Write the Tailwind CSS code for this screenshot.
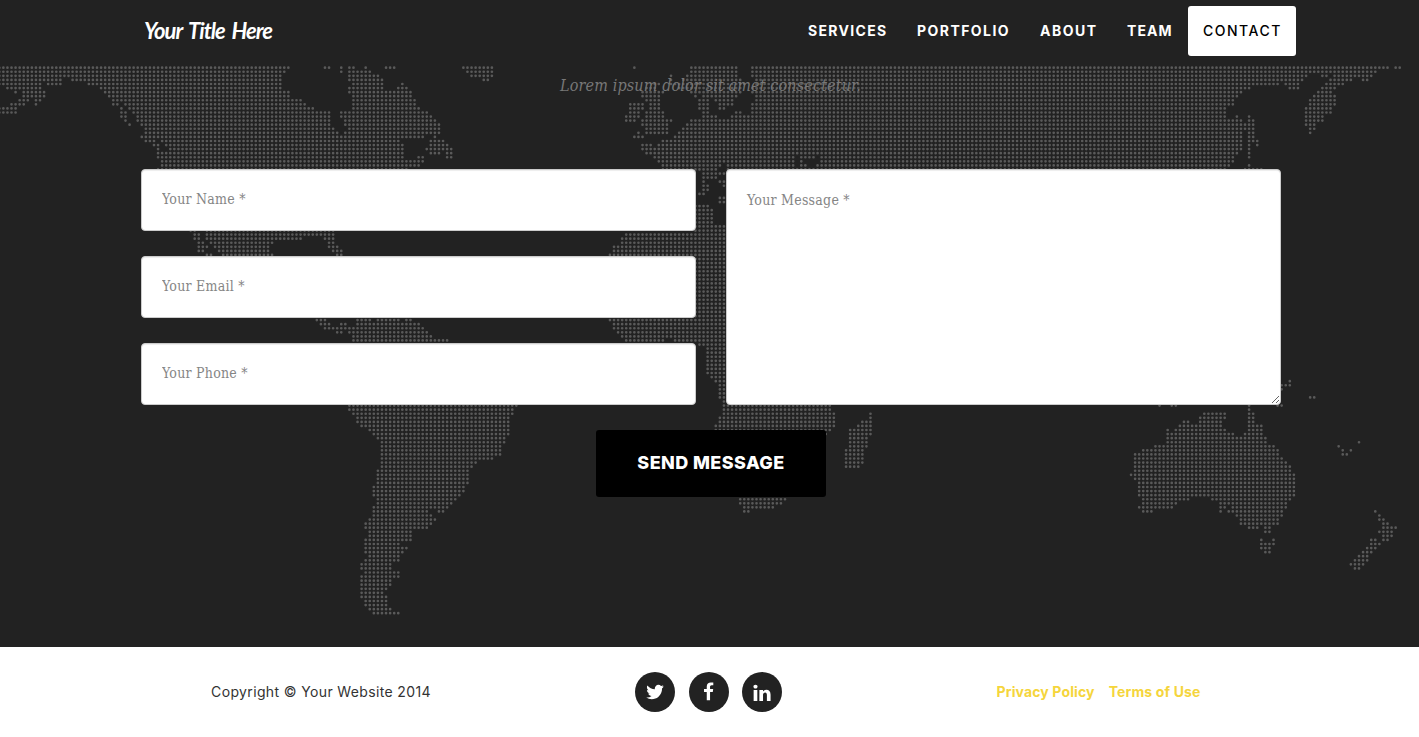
<!DOCTYPE html>
<html lang="en">
<head>
<meta charset="utf-8">
<title>Your Title Here</title>
<script src="https://cdn.jsdelivr.net/npm/@tailwindcss/browser@4"></script>
</head>
<body class="w-[1419px] h-[737px] overflow-hidden bg-white font-['Inter',sans-serif]">
<div class="relative h-[647px] bg-[#222222]">
  <svg id="map" class="absolute inset-0" width="1419" height="647" aria-hidden="true"><path id="dots" fill="none" stroke="#5a5a5a" stroke-width="2.7" stroke-linecap="round"/></svg>

  <nav class="relative h-[66px] bg-[#222222] pl-[144px] pr-[123px] pt-[6px] flex justify-between items-start text-white">
    <a class="h-[50px] pb-[2px] flex items-center text-[22px] font-bold italic font-['Lato',sans-serif] whitespace-nowrap tracking-[-1px] [word-spacing:3px]"><span>Your Title Here</span></a>
    <div class="flex text-[14px] font-bold whitespace-nowrap">
      <a class="h-[50px] pb-[2px] px-[15px] flex items-center w-[109px] tracking-[1.3px]"><span>SERVICES</span></a>
      <a class="h-[50px] pb-[2px] px-[15px] flex items-center w-[123px] tracking-[1.45px]"><span>PORTFOLIO</span></a>
      <a class="h-[50px] pb-[2px] px-[15px] flex items-center w-[87px] tracking-[1.5px]"><span>ABOUT</span></a>
      <a class="h-[50px] pb-[2px] px-[15px] flex items-center w-[76px] tracking-[1.1px]"><span>TEAM</span></a>
      <a class="h-[50px] pb-[2px] px-[15px] flex items-center w-[108px] tracking-[1.5px] bg-white text-black font-medium rounded-[3px]"><span>CONTACT</span></a>
    </div>
  </nav>

  <h3 class="relative h-[103px] pt-[8px] pl-[560px] text-[16px] leading-6 italic tracking-[0.14px] text-[#777777] font-['DejaVu_Serif_Condensed','DejaVu_Serif',serif] whitespace-nowrap"><span>Lorem ipsum dolor sit amet consectetur.</span></h3>

  <form class="relative ml-[141px] w-[1140px]">
    <div class="flex gap-[30px]">
      <div class="w-[555px] flex flex-col gap-[25px]">
        <input class="h-[62px] px-5 pb-[2px] bg-white border border-[#cccccc] rounded-[4px] shadow-[inset_0_1px_1px_rgba(0,0,0,0.075)] text-[14px] tracking-[0.25px] placeholder:text-[#858585] font-['DejaVu_Serif_Condensed','DejaVu_Serif',serif]" placeholder="Your Name *">
        <input class="h-[62px] px-5 pb-[2px] bg-white border border-[#cccccc] rounded-[4px] shadow-[inset_0_1px_1px_rgba(0,0,0,0.075)] text-[14px] tracking-[0.25px] placeholder:text-[#858585] font-['DejaVu_Serif_Condensed','DejaVu_Serif',serif]" placeholder="Your Email *">
        <input class="h-[62px] px-5 pb-[2px] bg-white border border-[#cccccc] rounded-[4px] shadow-[inset_0_1px_1px_rgba(0,0,0,0.075)] text-[14px] tracking-[0.25px] placeholder:text-[#858585] font-['DejaVu_Serif_Condensed','DejaVu_Serif',serif]" placeholder="Your Phone *">
      </div>
      <textarea class="w-[555px] h-[236px] p-5 bg-white border border-[#cccccc] rounded-[4px] shadow-[inset_0_1px_1px_rgba(0,0,0,0.075)] text-[14px] leading-5 tracking-[0.25px] placeholder:text-[#858585] font-['DejaVu_Serif_Condensed','DejaVu_Serif',serif]" placeholder="Your Message *"></textarea>
    </div>
    <button type="button" class="block mt-[25px] mx-auto w-[230px] h-[67px] pb-[2px] bg-black rounded-[3px] text-white text-[18px] font-extrabold tracking-[0.4px] whitespace-nowrap"><span>SEND MESSAGE</span></button>
  </form>
</div>

<footer class="ml-[126px] w-[1170px] pt-[25px] grid grid-cols-3 text-[14px] leading-10 whitespace-nowrap">
  <div class="text-center text-[#333333] tracking-[0.36px]"><span>Copyright © Your Website 2014</span></div>
  <div class="flex justify-center gap-[13.5px] pr-[5px]">
    <a class="size-10 rounded-full bg-[#222222] flex items-center justify-center"><svg width="20" height="20" viewBox="0 0 1664 1792" fill="white"><path d="M1620 408q-67 98-162 167 1 14 1 42 0 130-38 259.500t-115.500 248.500-184.500 210.500-258 146-323 54.500q-271 0-496-145 35 4 78 4 225 0 401-138-105-2-188-64.500t-114-159.500q33 5 61 5 43 0 85-11-112-23-185.500-111.500t-73.500-205.500v-4q68 38 146 41-66-44-105-115t-39-154q0-88 44-163 121 149 294.500 238.500t371.500 99.500q-8-38-8-74 0-134 94.500-228.500t228.500-94.500q140 0 236 102 109-21 205-78-37 115-142 178 93-10 186-50z"/></svg></a>
    <a class="size-10 rounded-full bg-[#222222] flex items-center justify-center"><svg width="11" height="20" viewBox="0 0 1024 1792" fill="white"><path d="M959 12v264h-157q-86 0-116 36t-30 108v189h293l-39 296h-254v759h-306v-759h-255v-296h255v-218q0-186 104-288.500t277-102.500q147 0 228 12z"/></svg></a>
    <a class="size-10 rounded-full bg-[#222222] flex items-center justify-center"><svg class="mt-px" width="18" height="20" viewBox="0 0 1536 1792" fill="white"><path d="M349 625v991h-330v-991h330zM370 319q1 73-50.500 122t-135.500 49h-2q-82 0-132-49t-50-122q0-74 51.500-122.500t134.500-48.500 133 48.500 51 122.500zM1536 1048v568h-329v-530q0-105-40.500-164.500t-126.500-59.500q-63 0-105.500 34.500t-63.500 85.500q-11 30-11 81v553h-329q2-399 2-647t-1-296l-1-48h329v144h-2q20-32 41-56t56.500-52 87-43.500 114.500-15.500q171 0 275 113.500t104 332.500z"/></svg></a>
  </div>
  <div class="flex justify-center gap-[14px] pr-[5px] text-[#f5d53c] font-bold tracking-[0.13px]"><a><span>Privacy Policy</span></a><a><span>Terms of Use</span></a></div>
</footer>

<script>
// Land areas of the dotted map. Each region: left edge in px, then "row:first-last,..." in thirds of a pixel.
const regions = [
[0, `0:0-865,977-990,1025,1050-1062,1098,1159-1183,1390-1476
1:0-855,1025,1050-1110,1403-1476
2:0-843,1050-1135,1415-1476
3:0-182,218-835,1050-1147,1452-1464
4:0-122,145-175,267-835,1062-1147,1208
5:22-122,305-835,1050-1147,1195-1220
6:48,72-135,317-865,1050-1232
7:72-135,330-865,1062-1232
8:60-85,110-122,342-903,1062-1245
9:35-72,110,342-355,378-915,1062-1245
10:0-48,365,390-940,1062-1257
11:0-48,365-378,403-990,1025-1281
12:365-378,415-990,1025-1293
13:378,415-990,1037-1305
14:390,427-990,1037-1318
15:440-1000,1050-1318
16:440-1012,1037-1318
17:427-1269,1305
18:440-465,488-1195,1293-1330
19:465-477,500-1208,1293-1342
20:477,512-1208,1281-1305,1318-1354
21:477-1208,1293-1318,1342-1354
22:477-1208,1257-1269,1342-1354
23:488-1208,1220-1269
24:488-1257
25:477-1220`],
[540, `0:285,453-590,638-1100
1:453-590,638-1100
2:393,440-590,638-1100
3:393,430-600,650-1100
4:345-357,393,405-610,650-1100
5:320-345,415-600,640-1100
6:308-370,453-600,638-1100
7:308-357,465,490-590,650-670,687-1100
8:320-357,480-500,525-580,650-1100
9:272-308,332-357,480-500,540-580,638-1100
10:272-308,332-357,480-500,540-552,638-1100
11:272-296,320-370,490-500,590-600,638-1100
12:260-296,320-370,490-530,577-1100
13:260-284,308-395,453-1100
14:308-382,440-1100
15:320-382,430-1100
16:296,320-382,418-1100
17:284-308,405-1100
18:370-1100
19:308-332,357-1100
20:308-1100
21:320-1100
22:345-760,785-815,840-1100
23:357-755,785,840-1100
24:370-535,565-755,785-800,830-1100
25:370-530,565-1100
26:490-552
27:490-530
28:490,540-552
29:490-500,552
30:490-500
31:480-490
32:540-552
33:540-552
34:468-505
35:468-515
36:468-515
37:468-515`],
[900, `0:0-1462,1487-1499
1:0-1425
2:0-1220,1267-1280,1304-1413
3:0-1208,1292-1352,1389-1401
4:0-1135,1157-1195,1280-1328
5:0-1050,1170-1195,1267-1304
6:0-1025,1255-1292
7:0-1012,1243-1304
8:0-1000,1231-1304
9:0-1000,1231-1304
10:0-975,1218-1292
11:0-975,1218-1292
12:0-975,1012,1047,1218-1268
13:0-1025,1047-1060,1218-1268
14:0-1025,1035-1060,1218-1243
15:0-1025,1035-1060,1231-1243
16:0-1025,1047-1060,1231
17:0-1025,1047-1060
18:0-1025,1047-1072
19:0-1025,1047,1072
20:0-1025,1047
21:0-1012,1047
22:0-1000,1047
23:0-1000
24:0-988,1047
25:0-975,1035-1085`],
[180, `40:33-45,80-462
41:45-57,82-462
42:45-57,82-363,437-462
43:57-70,94-278,450-462
44:57-82,106-265,450-474
45:57-70,118-265,462-486
46:82-94,130-278,474-486`],
[590, `38:318-365
39:318-405
40:318-405
41:108-405
42:97-405
43:97-405
44:72-405
45:72-405
46:60-405
47-61:318-405
62:60-405
63:72-405
64:72-405
65:85-405
66:97-405
67:108-222,255-405
68:330-405
69-75:355-405
76:367-405
77:380-405
78-81:392-405
82:405
83:403-720
84:403-720
85:403-732,842
86:390-732,842
87:390-732,817-842
88:378-732,805-842
89:378-720,780-842
90:708,780-842
91-93:780-830
94-97:768-818
98:768-805
106:452-587
107:452-575
108:465-550
109:465-477`],
[280, `62:112-136,235-270,295-357,380-392
63:124-148,185-197,235-418
64:136-197,210-430
65:173-185,210-442
66:222-455
67:222-503
83:210-710
84:210-698
85:222-698
86:235-686
87:235-686
88:247-686
89:271-686
90:283-686
91:295-674
92:307-674
93-95:307-662
96:307-637
97:307-588
98:307-576
99-102:295-564
103:283-552
104:283-552
105:283-540
106:295-528
107:295-515
108:283-503
109:283-442,478-490
110:283-454
111:271-466
112:259-454
113:259-442
114:271-393
115:271-393
116:259-393
117:259-357
118:259-381
119:259-369
120:271-357
121:259-357
122:247-333
123:247-333
124:259-357
125:247-357
126:247-333
127:247-333
128:247-320
129:247-308
130:247-320
131:259-320
132:259-320
133:271-333
134:283-357`],
[1110, `77:539
78:515-539
79:515
81:600-612
83:148,185-197,417,502-514
84:417
85:283-344,417-429
86:271-344,417-429
87:222-234,271-332,417-429
88:210-332,417-454
89:173,197-344,417-454
90:173-369,405-454
91:173-466
92:173-466,746
93:136-490,685
94:99-502,697,722
95:75-502,697-710
96:75-515
97:75-527
98:75-539
99:75-539
100:63-551
101:75-551
102-105:87-551
106:99-234,307-539
107:99-197,332-527
108:87-185,332-344,369-527
109:99-124,332,357-515,795
110:381-515,807
111:393-502,807-820
112:393-502,820-832
113:417-442,466-478,820-857
114:466-478,807-844
115:820-844
116:454,490,783-795,820-832
117:454-490,783-807
118:454-478,771-795
119:466-478,759-783
120:747-771
121:735-771
122:722-759
123:735-747`]];
const pitch = 4.071, seen = new Set();
let d = '';
for (const [left, text] of regions) for (const line of text.split('\n')) {
  const [rowPart, spans] = line.split(':');
  const [r0, r1 = r0] = rowPart.split('-').map(Number);
  for (let r = r0; r <= r1; r++) for (const span of spans.split(',')) {
    const [a, b = a] = span.split('-').map(v => Math.round((left + v / 3 + 0.7) / pitch));
    for (let c = a; c <= b; c++) {
      const key = r * 1000 + c;
      if (seen.has(key)) continue;
      seen.add(key);
      d += `M${(c * pitch - 0.7).toFixed(2)} ${(67.7 + r * pitch).toFixed(2)}h0`;
    }
  }
}
document.getElementById('dots').setAttribute('d', d);
</script>
</body>
</html>
